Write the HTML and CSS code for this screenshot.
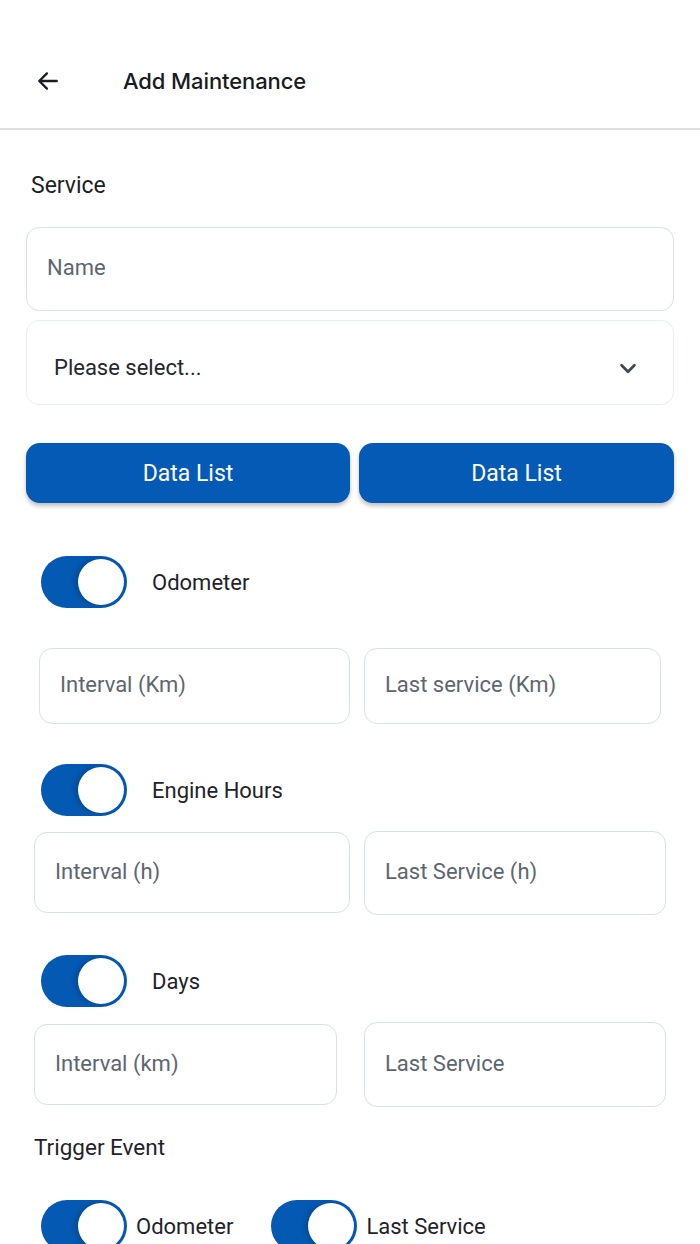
FILE: index.html
```html
<!DOCTYPE html>
<html lang="en">
<head>
  <meta charset="UTF-8" />
  <title>Add Maintenance</title>
  <link rel="stylesheet" href="styles.css">
</head>
<body>

  <!-- Top bar -->
  <header class="topbar">
    <button class="back-btn" type="button" aria-label="Back">
      <svg width="26" height="26" viewBox="0 0 24 24" fill="none" stroke="#1b1d24" stroke-width="2.2" stroke-linecap="round" stroke-linejoin="round">
        <path d="M20 12H4.5"/>
        <path d="M11 5l-7 7 7 7"/>
      </svg>
    </button>
    <h1 class="title">Add Maintenance</h1>
  </header>

  <main class="form">

    <div class="section-label">Service</div>

    <div class="field field-name">Name</div>

    <div class="field field-select">
      <span>Please select...</span>
      <svg width="22" height="22" viewBox="0 0 24 24" fill="none" stroke="#3f4750" stroke-width="3" stroke-linecap="round" stroke-linejoin="round">
        <path d="M5 9l7 7 7-7"/>
      </svg>
    </div>

    <div class="btn-row">
      <button type="button" class="btn btn-left">Data List</button>
      <button type="button" class="btn btn-right">Data List</button>
    </div>

    <!-- Odometer -->
    <div class="toggle-row toggle-first">
      <span class="toggle"><span class="knob"></span></span>
      <span class="toggle-text">Odometer</span>
    </div>
    <div class="pair pair-odo">
      <div class="field small">Interval (Km)</div>
      <div class="field small">Last service (Km)</div>
    </div>

    <!-- Engine hours -->
    <div class="toggle-row toggle-engine">
      <span class="toggle"><span class="knob"></span></span>
      <span class="toggle-text">Engine Hours</span>
    </div>
    <div class="pair pair-engine">
      <div class="field small">Interval (h)</div>
      <div class="field small">Last Service (h)</div>
    </div>

    <!-- Days -->
    <div class="toggle-row toggle-days">
      <span class="toggle"><span class="knob"></span></span>
      <span class="toggle-text">Days</span>
    </div>
    <div class="pair pair-days">
      <div class="field small">Interval (km)</div>
      <div class="field small">Last Service</div>
    </div>

    <div class="trigger-label">Trigger Event</div>

    <div class="trigger-row">
      <div class="trigger-item">
        <span class="toggle"><span class="knob"></span></span>
        <span class="trigger-text">Odometer</span>
      </div>
      <div class="trigger-item">
        <span class="toggle"><span class="knob"></span></span>
        <span class="trigger-text">Last Service</span>
      </div>
    </div>

  </main>

</body>
</html>
```

FILE: styles.css
```css
body {
  margin: 0;
  background: #fff;
  font-family: Roboto, "Noto Sans", sans-serif;
  color: #1f2329;
  width: 700px;
  height: 1244px;
  overflow: hidden;
}

/* header */
.topbar {
  display: flex;
  align-items: center;
  box-sizing: border-box;
  height: 90px;
  margin-top: 40px;
  padding-bottom: 6px;
  border-bottom: 2px solid #dedfe1;
}
.back-btn {
  border: none;
  background: none;
  padding: 0;
  margin-left: 35px;
  width: 26px;
  height: 26px;
  display: flex;
}
.title {
  margin: 0 0 0 62px;
  font-family: Inter, sans-serif;
  font-weight: 500;
  font-size: 22px;
  color: #191b22;
  letter-spacing: -0.1px;
}

/* form */
.form {
  padding: 0 26px;
}
.section-label {
  margin-top: 42px;
  margin-left: 5px;
  font-size: 23px;
  line-height: 28px;
  color: #1c1f25;
}
.field {
  box-sizing: border-box;
  border: 1.5px solid #d6e1ec;
  border-radius: 13px;
  background: #fff;
  display: flex;
  align-items: center;
  font-size: 22px;
  color: #5d6670;
}
.field-name {
  margin-top: 27px;
  height: 84px;
  padding-left: 20px;
  padding-bottom: 4px;
}
.field-select {
  margin-top: 9px;
  height: 85px;
  padding: 10px 34px 0 27px;
  justify-content: space-between;
  border-color: #e9eef3;
  color: #23272d;
}

.btn-row {
  display: flex;
  gap: 9px;
  margin-top: 38px;
}
.btn {
  height: 60px;
  border: none;
  border-radius: 14px;
  background: #045ab5;
  color: #fff;
  font-family: Roboto, sans-serif;
  font-size: 23px;
  box-shadow: 0 3px 4px rgba(0, 0, 0, 0.25);
}
.btn-left {
  width: 324px;
}
.btn-right {
  flex: 1;
}

/* toggles */
.toggle {
  box-sizing: border-box;
  display: flex;
  justify-content: flex-end;
  align-items: center;
  width: 86px;
  height: 52px;
  padding: 3px;
  border-radius: 26px;
  background: #0459b3;
  flex-shrink: 0;
}
.knob {
  width: 46px;
  height: 46px;
  border-radius: 50%;
  background: #fff;
  box-shadow: -3px 0 5px rgba(0, 0, 0, 0.18);
}
.toggle-row {
  display: flex;
  align-items: center;
  gap: 25px;
  margin-left: 15px;
  font-size: 22px;
  color: #1f2329;
}
.toggle-first {
  margin-top: 53px;
}
.toggle-engine {
  margin-top: 40px;
}
.toggle-days {
  margin-top: 40px;
}

.pair {
  display: flex;
  align-items: flex-start;
}
.pair .small {
  padding-left: 20px;
  padding-bottom: 3px;
}
.pair-odo {
  margin-top: 40px;
  padding-left: 13px;
}
.pair-odo .small {
  height: 76px;
}
.pair-odo .small:first-child {
  width: 311px;
}
.pair-odo .small:last-child {
  width: 297px;
  margin-left: 14px;
}
.pair-engine {
  margin-top: 15px;
  padding-left: 8px;
}
.pair-engine .small {
  height: 81px;
}
.pair-engine .small:first-child {
  width: 316px;
  margin-top: 1px;
}
.pair-engine .small:last-child {
  width: 302px;
  height: 84px;
  margin-left: 14px;
}
.pair-days {
  margin-top: 15px;
  padding-left: 8px;
}
.pair-days .small {
  height: 81px;
}
.pair-days .small:first-child {
  width: 303px;
  margin-top: 2px;
}
.pair-days .small:last-child {
  width: 302px;
  height: 85px;
  margin-left: 27px;
}

.trigger-label {
  margin-top: 26px;
  margin-left: 8px;
  font-size: 22.5px;
  line-height: 28px;
  color: #1f2329;
}
.trigger-row {
  display: flex;
  gap: 38px;
  margin-top: 39px;
  margin-left: 15px;
}
.trigger-item {
  display: flex;
  align-items: center;
  gap: 9px;
  font-size: 22px;
  color: #1f2329;
}
```
